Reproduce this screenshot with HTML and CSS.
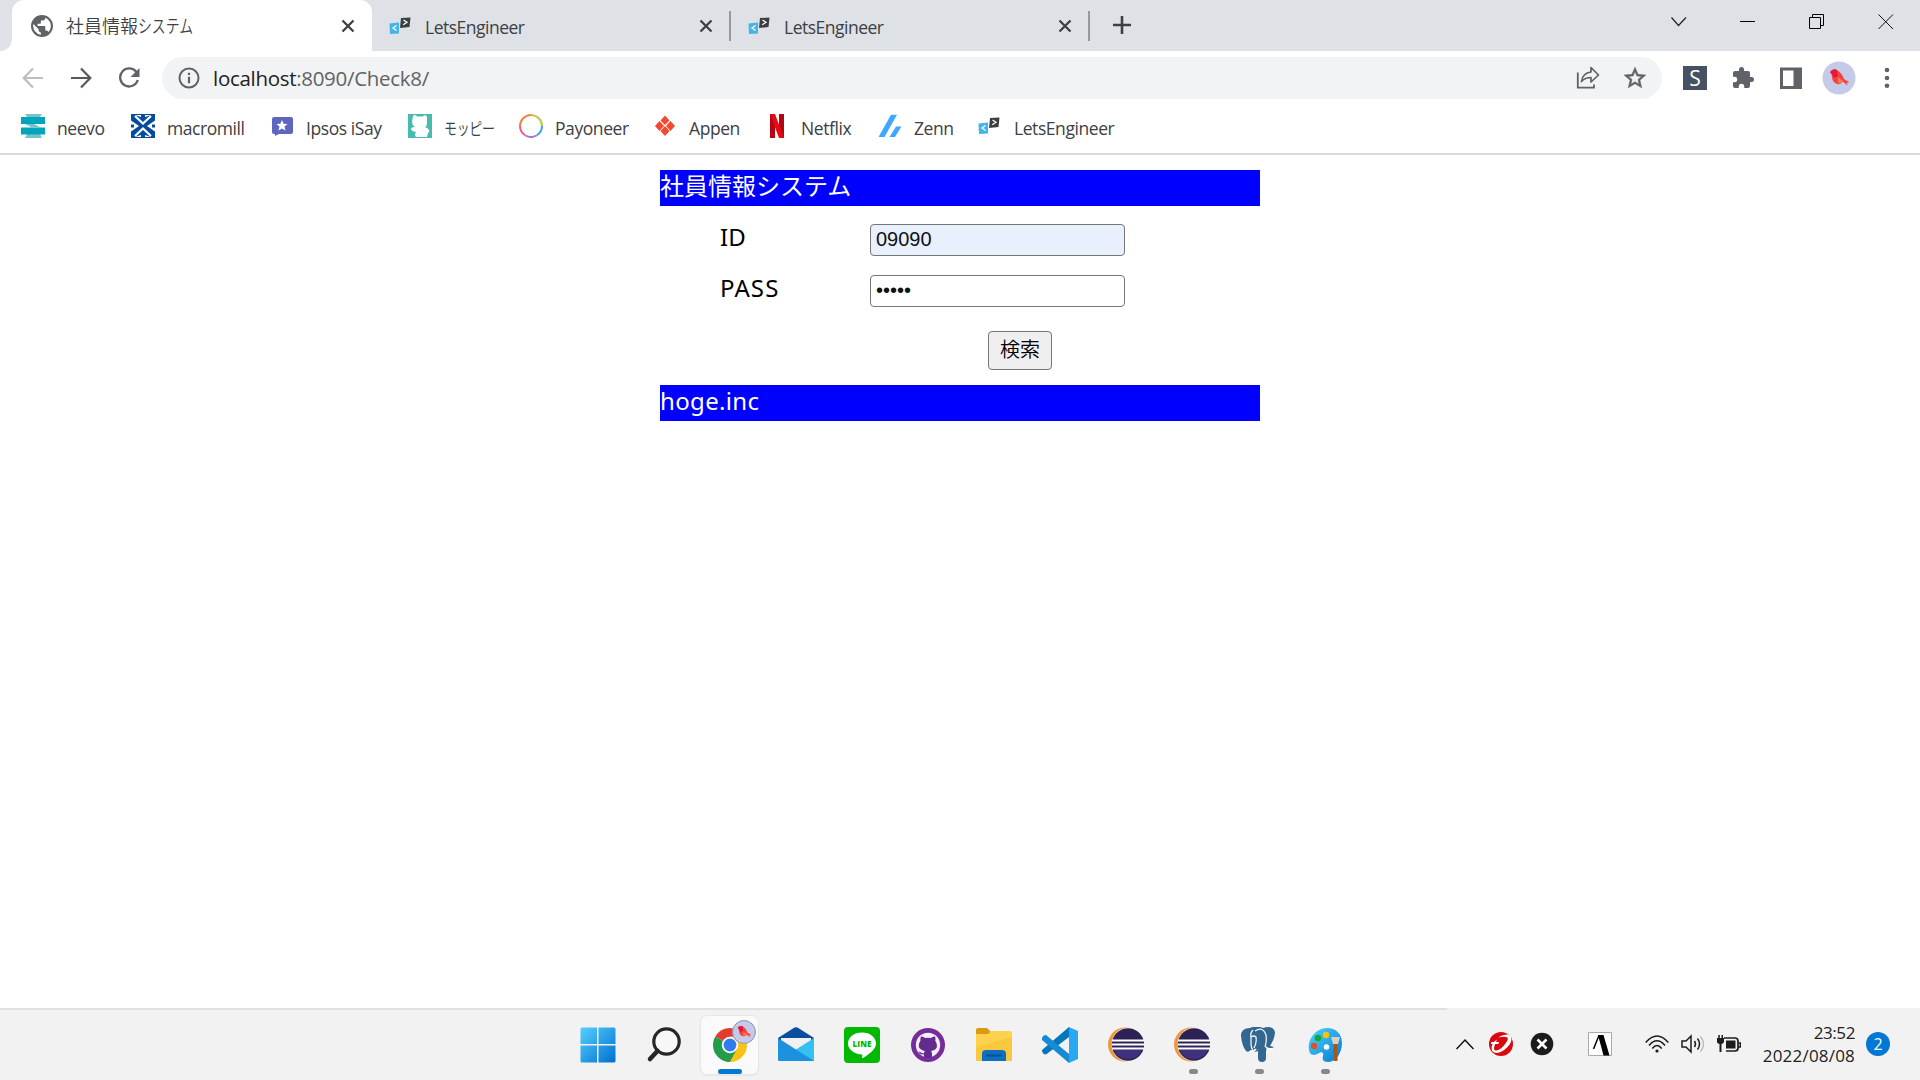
FILE: index.html
```html
<!DOCTYPE html>
<html lang="ja">
<head>
<meta charset="utf-8">
<title>社員情報システム</title>
<link rel="stylesheet" href="styles.css">
</head>
<body>
<svg class="defs" width="0" height="0">
  <defs>
    <symbol id="close" viewBox="0 0 14 14"><path d="M1.5 1.5 12.500 12.500M12.500 1.500 1.500 12.500" stroke="#3c4043" stroke-width="2.300" fill="none"/></symbol>
    <symbol id="lets" viewBox="0 0 22 18"><path d="M.5 6.500l9.500-1v11l-9 .5z" fill="#45b4e8"/><path d="M12 1l9.500-.5-1 9.500-9.500 1z" fill="#3c3f42"/><path d="M7.500 8.500 4 11l3.500 2.500M14.500 3l3.500 2.300-3.800 2.500" stroke="#fff" stroke-width="1.300" fill="none"/></symbol>
    <symbol id="bird" viewBox="0 0 34 34"><circle cx="17" cy="17" r="16.500" fill="#c5cae9"/><path d="M8 11q3-4 7-2 5 3 7 9l5 3-1 1-2-.5 2 3-2-1-3-3q-3 4-7 2-4-2-4-7 0-3-2-4.500z" fill="#f4433c"/><path d="M8 11q3-4 7-2l1 6-4 2q-1-3-4-6z" fill="#e5173f"/><path d="M16 16l5 4q-2 3-5 2z" fill="#ff7a50"/></symbol>
    <symbol id="eclipse" viewBox="0 0 36 36"><circle cx="17" cy="17.500" r="17" fill="#f0993a"/><circle cx="20.500" cy="17.500" r="17" fill="#f3f3f3"/><circle cx="20" cy="17.500" r="16.200" fill="#2c2255"/><path d="M6 23h28q-4 9-14 9T6 23z" fill="#41307d"/><path d="M4 13.500h32M4 17.500h32M4 21.500h32" stroke="#fff" stroke-width="1.800"/></symbol>
  </defs>
</svg>

<header class="tabstrip">
  <div class="edge"></div>
  <div class="tab active">
    <svg class="globe" viewBox="0 0 24 24"><path fill="#5f6368" d="M12 1a11 11 0 1 0 0 22 11 11 0 0 0 0-22zm-1.100 19.700A8.800 8.800 0 0 1 3.400 10l5.200 5.200v1.100c0 1.200 1 2.200 2.300 2.200v2.200zm7.600-2.800a2.200 2.200 0 0 0-2.100-1.500h-1.100v-3.300c0-.6-.5-1.100-1.100-1.100H7.600V9.800h2.200c.6 0 1.100-.5 1.100-1.100V6.500h2.200c1.200 0 2.200-1 2.200-2.200v-.5a8.800 8.800 0 0 1 3.200 14.100z"/></svg>
    <span class="title">社員情報<span class="kana">システム</span></span>
    <svg class="x"><use href="#close"/></svg>
  </div>
  <div class="tab">
    <svg class="lets"><use href="#lets"/></svg><span class="title">LetsEngineer</span><svg class="x"><use href="#close"/></svg>
  </div>
  <div class="tab">
    <svg class="lets"><use href="#lets"/></svg><span class="title">LetsEngineer</span><svg class="x"><use href="#close"/></svg>
  </div>
  <svg class="plus" viewBox="0 0 18 18"><path d="M9 0v18M0 9h18" stroke="#3c4043" stroke-width="2.600"/></svg>
  <div class="window-buttons">
    <svg viewBox="0 0 16 16"><path d="M.5 3.500 7.500 11.500 15 3.500" fill="none" stroke="#222" stroke-width="1.200"/></svg>
    <svg viewBox="0 0 16 16"><path d="M0 7.500h15" stroke="#000"/></svg>
    <svg viewBox="0 0 16 16"><path d="M.5 3.500h11v11H.5zM3.500 3.500v-3h11v11h-3" fill="none" stroke="#000"/></svg>
    <svg viewBox="0 0 16 16"><path d="m.5.500 14.500 14.500M15 .500l-14.500 14.500" stroke="#111"/></svg>
  </div>
</header>

<nav class="toolbar">
  <div class="nav-buttons">
    <svg viewBox="0 0 22 22"><path d="M21 11H2M11 1.500 1.700 11l9.300 9.500" fill="none" stroke="#bbbdbf" stroke-width="2.200"/></svg>
    <svg viewBox="0 0 22 22"><path d="M1 11h19M11 1.500l9.300 9.500-9.300 9.500" fill="none" stroke="#55585c" stroke-width="2.200"/></svg>
    <svg viewBox="0 0 22 22"><path d="M18.700 5.500A9 9 0 1 0 19.800 13" fill="none" stroke="#5f6368" stroke-width="2.300"/><path d="M21.500 1v9h-9z" fill="#5f6368"/></svg>
  </div>
  <div class="omnibox">
    <svg class="info" viewBox="0 0 22 22"><circle cx="11" cy="11" r="9.500" fill="none" stroke="#5f6368" stroke-width="2"/><path d="M11 9.800v6.500M11 5.700V8" stroke="#5f6368" stroke-width="2.200"/></svg>
    <span class="url"><b>localhost</b>:8090/Check8/</span>
    <svg class="share" viewBox="0 0 24 24"><path d="M1.800 6.500v15.200H18v-3.200" fill="none" stroke="#5f6368" stroke-width="1.800"/><path d="M5.500 15.500Q6.500 7 15 6V1.500L22.500 9 15 16v-4.500q-6 0-9.500 4z" fill="none" stroke="#5f6368" stroke-width="1.700" stroke-linejoin="round"/></svg>
    <svg class="star" viewBox="0 0 24 24"><path fill="#5f6368" stroke="#5f6368" stroke-width=".5" d="M22 9.240l-7.190-.62L12 2 9.190 8.630 2 9.240l5.460 4.730L5.820 21 12 17.270 18.180 21l-1.630-7.030L22 9.240zM12 15.400l-3.760 2.270 1-4.280-3.320-2.880 4.380-.38L12 6.100l1.710 4.040 4.380.38-3.320 2.880 1 4.280L12 15.400z"/></svg>
  </div>
  <div class="extensions">
    <span class="ext-s">S</span>
    <svg viewBox="0 0 24 24"><path fill="#5f6368" d="M20.500 11H19V7a2 2 0 0 0-2-2h-4V3.500a2.500 2.500 0 0 0-5 0V5H4a2 2 0 0 0-2 2v3.800h1.500a2.700 2.700 0 0 1 0 5.400H2V20c0 1.100.9 2 2 2h3.800v-1.500a2.700 2.700 0 0 1 5.400 0V22H17a2 2 0 0 0 2-2v-4h1.500a2.500 2.500 0 0 0 0-5z"/></svg>
    <svg viewBox="0 0 24 24"><path d="M1 1.500h22V23H1z" fill="#5f6368"/><path d="M4 4.500h10.500V20H4z" fill="#fff"/></svg>
    <svg class="avatar"><use href="#bird"/></svg>
    <svg viewBox="0 0 24 24" fill="#5f6368"><circle cx="12" cy="4" r="2.300"/><circle cx="12" cy="12" r="2.300"/><circle cx="12" cy="19.700" r="2.300"/></svg>
  </div>
</nav>

<nav class="bookmarks">
  <a><svg viewBox="0 0 24 24"><path d="M4 0h17l-2 3H6zM4 24h17l-2-4H6z" fill="#75c5c6"/><path d="M0 3h24v7H0zM0 13.500h24v7H0z" fill="#00a5bd"/><path d="M4 10h9l7 3.500h-9z" fill="#75c5c6"/></svg>neevo</a>
  <a><svg viewBox="0 0 24 24"><path d="M0 0h24v24H0z" fill="#064b9d"/><path d="m4 2 8 7.500L20 2M4 22l8-7.500 8 7.500" fill="none" stroke="#fff" stroke-width="2.200"/><path d="M4 1h6v2zM20 1h-6v2zM4 23h6v-2zM20 23h-6v-2zM0 6.500 8 12l-8 5.500v-4h3v-3H0zM24 6.500 16 12l8 5.500v-4h-3v-3h3z" fill="#fff"/></svg>macromill</a>
  <a><svg viewBox="0 0 24 24"><path d="M4 3h17q2 0 2 2v13q0 2-2 2H9l-4 2v-2q-3 0-3-2V5q0-2 2-2z" fill="#5c67bd"/><path d="m12 6 1.600 3.700 4 .3-3.100 2.600 1 4-3.500-2.100-3.500 2.100 1-4L6.400 10l4-.3z" fill="#fff"/></svg>Ipsos iSay</a>
  <a><svg viewBox="0 0 24 24"><path d="M0 0h24v24H0z" fill="#46bbb0"/><path d="M5 2q2-2 4 .5h6q3-2.500 4 .5v6q0 3-2 4 3 1 4 3 1 2-1 3l-1 4H8q-2-2 0-5-5-1-5-3t4-2q-3-2-3-5z" fill="#fff"/></svg><span class="kana">モッピー</span></a>
  <a><svg viewBox="0 0 24 24" fill="none" stroke-width="2"><path d="M12 1A11 11 0 0 1 23 12" stroke="#b9c957"/><path d="M23 12a11 11 0 0 1-5.500 9.500" stroke="#32a4e4"/><path d="M17.500 21.500A11 11 0 0 1 6.500 21.500" stroke="#a878d8"/><path d="M6.500 21.500A11 11 0 0 1 1 12" stroke="#ee588a"/><path d="M1 12A11 11 0 0 1 12 1" stroke="#f28243"/></svg>Payoneer</a>
  <a><svg viewBox="0 0 24 24" fill="#f04a2f"><path d="m12 1.500 4.500 5L12 11 7.500 6.500zM12 12l4.500 5-4.500 5-4.500-5zM6.500 7l4.500 5-4.500 5L2 12zM17.500 7l4.500 5-4.500 5-4.500-5z"/></svg>Appen</a>
  <a><svg viewBox="0 0 24 24"><path d="M5 0h5v24H5zM14 0h5v24h-5z" fill="#b20710"/><path d="M5 0h5l9 24h-5z" fill="#e50914"/></svg>Netflix</a>
  <a><svg viewBox="0 0 24 24" fill="#3ea8ff"><path d="M13 .8h6L6.500 23H.5zM18 12.500h5.500L17 23h-5.500z"/></svg>Zenn</a>
  <a><svg viewBox="0 0 24 24"><use href="#lets" x="0" y="3" width="22" height="18"/></svg>LetsEngineer</a>
</nav>

<main class="page">
  <div class="bar">社員情報システム</div>
  <form class="login">
    <label for="id">ID</label><input id="id" class="filled" type="text" value="09090">
    <label for="pass" class="wide">PASS</label><input id="pass" type="password" value="aaaaa">
    <button type="button">検索</button>
  </form>
  <div class="bar company">hoge.inc</div>
</main>

<footer class="taskbar">
  <div class="apps">
    <div class="app"><svg viewBox="0 0 36 36"><defs><linearGradient id="win" x2="1" y2="1"><stop stop-color="#54d0ff"/><stop offset="1" stop-color="#006fd0"/></linearGradient></defs><path d="M2 .5h15v16.500H.5V2Q.5.500 2 .5zM18.500.500H34q1.500 0 1.500 1.500v15h-17zM.5 18.500H17v17H2Q.5 35.500.5 34zM18.500 18.500h17V34q0 1.500-1.500 1.500H18.500z" fill="url(#win)"/></svg></div>
    <div class="app"><svg viewBox="0 0 36 36" fill="none" stroke="#262626"><circle cx="20.500" cy="14.500" r="12.700" fill="#f7f7f7" stroke-width="3.200"/><path d="m11.500 24-7.500 8" stroke-width="4.500" stroke-linecap="round"/></svg></div>
    <div class="app current"><svg viewBox="0 0 36 36"><path d="M18 18 3.300 9.500A17 17 0 0 1 32.700 9.500z" fill="#e33b2e"/><path d="M18 18 3.300 9.500A17 17 0 0 0 18 35l7.500-13z" fill="#249c49"/><path d="M18 18h-1l8 4-7 13A17 17 0 0 0 32.700 9.500H18z" fill="#fbc116"/><circle cx="18" cy="18" r="8.200" fill="#fff"/><circle cx="18" cy="18" r="6.400" fill="#2e7cee"/></svg><svg class="badge"><use href="#bird"/><circle cx="12" cy="12" r="11.400" fill="none" stroke="#8f95b5"/></svg></div>
    <div class="app"><svg viewBox="0 0 36 36"><path d="M0 11 16.500.600q1.500-.8 3 0L36 11v4H0z" fill="#0a4f9e"/><path d="M3 11h30v13H3z" fill="#f1f1f1"/><path d="M36 11v23H0z" fill="#35c0f2"/><path d="M0 11l36 23H1.500Q0 34 0 32.500z" fill="#1b91e0"/></svg></div>
    <div class="app"><svg viewBox="0 0 36 36"><rect width="36" height="36" rx="4" fill="#00b900"/><path d="M18 5.500c8 0 14 4.800 14 11 0 5-5 9.500-13 14.500-1 .4-1-.3-.8-1.200l.2-2.300C10 27 4 22.500 4 16.500c0-6.200 6-11 14-11z" fill="#fff"/><text x="18" y="19.500" text-anchor="middle" textLength="19" class="line">LINE</text></svg></div>
    <div class="app"><svg viewBox="0 0 36 36"><circle cx="18" cy="18" r="17" fill="#752d9b"/><circle cx="18" cy="18" r="12.200" fill="#f4eff7"/><path d="M11 9.500q2-.5 4 1.500 3-.7 6 0 2-2 4-1.500.8 2 .2 4 5 9-4.200 10.500 1 1 1 3v3.500q-4 1.500-8 0v-3q-4.500.5-5.500-3 2 .2 3 1.600 1.500.8 2.500-.1.200-1.500 1-2Q5.500 22 10.500 13.500q-.3-2 .5-4z" fill="#642b8f"/></svg></div>
    <div class="app"><svg viewBox="0 0 36 36"><path d="M0 3q0-2 2-2h9l4 4-3 5H0z" fill="#d99c10"/><path d="M15 4h19q2 0 2 2v28H0V7h12z" fill="#fdd04e"/><path d="M0 34V20L36 10v24z" fill="#fac83c"/><path d="M6 34V27q0-4 4-4h16q4 0 4 4v7z" fill="#0c6fc0"/><path d="M11 28.500h14" stroke="#064f91" stroke-width="2" stroke-linecap="round"/></svg></div>
    <div class="app"><svg viewBox="0 0 36 36"><path d="M27 0v10L4 27.500Q1 27.500 0 24v-1z" fill="#0577bc"/><path d="M0 11q1-3 4-3l23 19v9L0 13z" fill="#138bd5"/><path d="m27 0 9 4v28l-9 4z" fill="#29a7f2"/></svg></div>
    <div class="app"><svg><use href="#eclipse"/></svg></div>
    <div class="app open"><svg><use href="#eclipse"/></svg></div>
    <div class="app open"><svg viewBox="0 0 36 36"><path d="M10 1Q1 1 1 9q1 10 5 15 2 2 5-1 3 3 7 1v7q0 4 4 4t4-4v-7l1-3q4 2 7-1l-4-1q5-8 5-14-2-7-12-4Q16-2 10 1z" fill="#336791"/><path d="M13 3q-3 3-2 7v7q0 4 2 6M15 4q8-5 11 4 1 5-1 12M11 10q3-2 5 0 1 5-2 11" fill="none" stroke="#f4f4f4" stroke-width="1.300"/><path d="M16 22q-2 3-6 2M26 20q2 3 7 1.500" fill="none" stroke="#fff" stroke-width="1.800"/></svg></div>
    <div class="app open"><svg viewBox="0 0 36 36"><defs><linearGradient id="paint" x2="1" y2="1"><stop stop-color="#48d7ff"/><stop offset="1" stop-color="#0877ce"/></linearGradient></defs><path d="M20 1c9 0 15 6 15 15 0 11-7 19-14 19-5 0-6-3-5-6s-1-5-4-3-9 4-10-3C0 12 9 1 20 1z" fill="url(#paint)"/><circle cx="7" cy="19" r="3.200" fill="#df5025"/><circle cx="11" cy="11" r="3.300" fill="#20a52c"/><circle cx="19" cy="8" r="3.200" fill="#ffc20c"/><circle cx="19.500" cy="20" r="2.800" fill="#fff"/><path d="M26.500 16h4v18h-4z" fill="#a45a16"/><path d="M24 10h9l-2 7h-5z" fill="#ddd0bd"/></svg></div>
  </div>
  <div class="tray">
    <svg class="chev" viewBox="0 0 18 12"><path d="m.5 11 8.500-9 8.500 9" fill="none" stroke="#111" stroke-width="1.500"/></svg>
    <svg class="trend" viewBox="0 0 24 24"><circle cx="12" cy="12" r="12" fill="#d9090f"/><path d="M9 5.500Q17 1 21 3.500q4 5-3 12-7 7-13 5-4-2-1.500-8.500H1.800l.5-2h2.500L8 7.500 7 10h3l-.6 2H6.200q-2.500 6 .3 6.500 4 0 8.500-5Q20.500 7 18 5.300 15.500 4 9 5.500z" fill="#fff"/></svg>
    <svg class="round-x" viewBox="0 0 24 24"><circle cx="12" cy="12" r="11.300" fill="#1c1c1c"/><path d="m7.500 7.500 9 9M16.500 7.500l-9 9" stroke="#fff" stroke-width="2.600"/></svg>
    <svg class="ime" viewBox="0 0 24 24"><path d="M.5.500h23v23H.5z" fill="#fff" stroke="#aaa"/><path d="M10 3h5.500l6 20.500h-6z" fill="#000"/><path d="M11 3.500 5.500 17" stroke="#000" stroke-width="1.500"/></svg>
    <svg class="wifi" viewBox="0 0 24 20" fill="none" stroke="#1c1c1c" stroke-width="1.500"><path d="M.7 8.500q11.300-13 22.600 0M4 11.500q8-9.500 16 0M7.300 14.500q4.700-6 9.400 0"/><circle cx="12" cy="17" r="1.600" fill="#1c1c1c" stroke="none"/></svg>
    <svg class="speaker" viewBox="0 0 24 20" fill="none" stroke="#1c1c1c" stroke-width="1.500"><path d="M1 7h4l5-5v16l-5-5H1zM13.500 7q2 3 0 6M16.500 4.500q4 5.500 0 11"/><path d="M19.500 2.500q6 7.500 0 15" stroke="#bbb"/></svg>
    <svg class="battery" viewBox="0 0 24 20"><path d="M7 4h11q3 0 3 3v7q0 3-3 3H9M21 9h2.500v4H21" fill="none" stroke="#1c1c1c" stroke-width="1.700"/><path d="M9 6.500h9.500v8H9z" fill="#1c1c1c"/><path d="M0 4h7v4q-1 2-2.500 2v8h-2v-8Q0 9.500 0 8zM1.300 1h1.500v3H1.300zM4.500 1H6v3H4.500z" fill="#1c1c1c"/></svg>
    <div class="clock"><span>23:52</span><span class="date">2022/08/08</span></div>
    <span class="count">2</span>
  </div>
</footer>
</body>
</html>
```

FILE: styles.css
```css
* { box-sizing: border-box; }
body {
  margin: 0; width: 1920px; height: 1080px; overflow: hidden;
  display: flex; flex-direction: column; background: #fff;
  font-family: "Open Sans", "Noto Sans CJK JP", sans-serif; color: #3c4043;
}
svg { display: block; flex: none; }
.defs { position: absolute; }

.tabstrip { height: 51px; background: #dee1e6; display: flex; flex: none; }
.edge { width: 12px; background: #fff; }
.edge::before { content: ""; display: block; height: 51px; background: #dee1e6; border-bottom-right-radius: 12px; }
.tab { width: 359px; display: flex; align-items: center; padding: 0 18px 0 17px; }
.tab + .tab::after { content: ""; width: 2px; height: 30px; background: #96999d; margin: 0 -18px 0 auto; }
.tab.active { width: 360px; background: #fff; border-radius: 12px 12px 0 0; padding-left: 18px; }
.globe { width: 24px; height: 24px; }
.title { flex: none; font-size: 17.500px; letter-spacing: -.5px; white-space: nowrap; margin-left: 14px; width: 274px; padding-top: 2px; }
.active .title { font-size: 18px; letter-spacing: 0; margin-left: 12px; width: 275px; padding-top: 0; margin-top: -2px; font-family: "Noto Sans CJK JP", sans-serif; font-weight: 350; }
.kana { display: inline-block; transform: scaleX(.77); transform-origin: left; }
.x { width: 14px; height: 14px; }
.lets { width: 22px; height: 18px; }
.plus { width: 18px; height: 18px; margin: 16px 0 0 23px; }
.window-buttons { margin: 14px 26px 0 auto; display: flex; gap: 53px; }
.window-buttons svg { width: 16px; height: 16px; }

.toolbar { height: 54px; display: flex; align-items: center; flex: none; }
.nav-buttons { width: 162px; padding-left: 22px; display: flex; gap: 26px; }
.nav-buttons svg { width: 22px; height: 22px; }
.omnibox { width: 1500px; height: 42px; border-radius: 21px; background: #f1f3f4; display: flex; align-items: center; padding: 0 14px 0 16px; }
.info { width: 22px; height: 22px; }
.url { font-size: 20.500px; color: #5f6368; margin: 0 auto 0 13px; letter-spacing: -.3px; }
.url b { font-weight: 400; color: #202124; }
.share { width: 24px; height: 24px; margin-right: 22px; }
.star { width: 26px; height: 26px; }
.extensions { display: flex; align-items: center; gap: 24px; margin-left: 21px; }
.extensions svg { width: 24px; height: 24px; }
.extensions .avatar { width: 34px; height: 34px; margin: 0 -5px; }
.ext-s { width: 24px; height: 24px; background: #465262; color: #fff; font-size: 21px; line-height: 24px; text-align: center; }

.bookmarks {
  height: 50px; flex: none; border-bottom: 2px solid #dadadc; padding: 0 0 3px 21px; align-items: center;
  display: grid; grid-template-columns: 110px 139px 138px 111px 134px 112px 113px 100px 200px;
  font-size: 17.500px; letter-spacing: -.43px; white-space: nowrap; line-height: 24px;
}
.bookmarks a { display: flex; gap: 12px; align-items: center; }
.bookmarks svg { width: 24px; height: 24px; margin-top: -3px; }
.bookmarks .kana { font-weight: 350; transform: scaleX(.74); }

.page { width: 600px; margin: 15px auto 0; flex: 1; font: 24px/36px "Noto Sans", "Noto Sans CJK JP", sans-serif; color: #000; }
.bar { height: 36px; line-height: 31px; background: #00f; color: #fff; }
.company { letter-spacing: .35px; }
.login { height: 179px; padding: 18px 0 0 60px; display: grid; grid-template-columns: 150px 255px; grid-template-rows: 51px 51px 45px; align-items: start; }
.login label { line-height: 26px; }
.login .wide { letter-spacing: 1.100px; }
.login input { width: 255px; height: 32px; border: 1px solid #767676; border-radius: 4px; font: 20px "Liberation Sans", sans-serif; padding: 0 5px 2px; outline: 0; background: #fff; color: #111; }
.login .filled { background: #e8f0fe; }
.login button { grid-column: 2; justify-self: start; width: 64px; height: 39px; margin: 5px 0 0 118px; padding: 0 0 5px; border: 1px solid #767676; border-radius: 4px; background: #efefef; color: #000; font: 350 20px "Noto Sans CJK JP", sans-serif; }

.taskbar { height: 72px; flex: none; background: #f2f2f2; display: flex; position: relative; }
.taskbar::before { content: ""; position: absolute; top: 0; left: 0; width: 1447px; height: 2px; background: #e0e0e0; }
.apps { display: flex; margin-left: 569px; gap: 9.100px; padding-top: 8px; }
.app { width: 57px; height: 58px; position: relative; padding: 11px 10.500px; }
.app > svg:not(.badge) { width: 36px; height: 36px; }
.current { background: #fafafa; border-radius: 6px; box-shadow: 0 0 0 1px #e7e7e7, 0 1px 2px #ccc; }
.current::after, .open::after { content: ""; position: absolute; bottom: 0; left: 17px; width: 24px; height: 5px; border-radius: 3px; background: #0078d4; }
.open::after { left: 25px; width: 9px; background: #888; }
.badge { position: absolute; width: 24px; height: 24px; left: 31px; top: 4px; }
.line { font: 800 8px "Open Sans", sans-serif; fill: #00b900; }
.tray { margin-left: auto; display: flex; align-items: center; padding-right: 30px; color: #222; }
.chev { width: 18px; height: 12px; margin-right: 15px; }
.trend { width: 24px; height: 24px; margin-right: 17px; }
.round-x { width: 24px; height: 24px; margin-right: 34px; }
.ime { width: 24px; height: 24px; margin-right: 33px; }
.wifi, .speaker, .battery { width: 24px; height: 20px; margin-right: 12px; }
.clock { width: 102px; display: flex; flex-direction: column; text-align: right; font-size: 17px; line-height: 23px; letter-spacing: -.4px; }
.date { letter-spacing: .2px; }
.count { width: 24px; height: 24px; margin-left: 11px; border-radius: 50%; background: #0078d4; color: #fff; font-size: 16px; line-height: 24px; text-align: center; }
```
